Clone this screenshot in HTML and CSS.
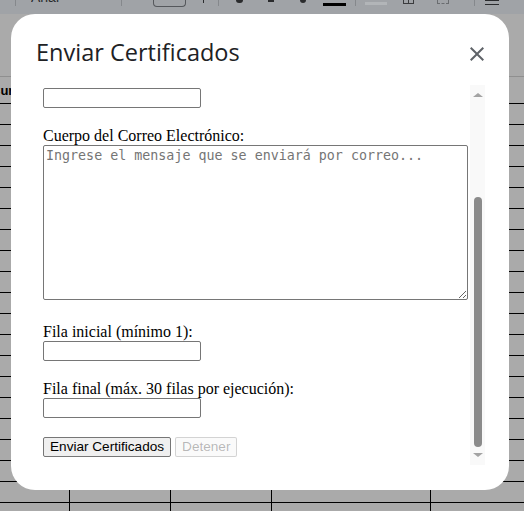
FILE: index.html
```html
<!DOCTYPE html>
<html lang="es">
<head>
<meta charset="utf-8">
<title>Enviar Certificados</title>
<link rel="stylesheet" href="styles.css">
</head>
<body>
<div class="sheet">
  <div class="toolbar">
    <span class="tb-sep tb-s1"></span>
    <span class="tb-font"><span class="tb-font-text">Arial</span></span>
    <span class="tb-sep tb-s2"></span>
    <span class="tb-size"></span>
    <span class="tb-plus"></span>
    <span class="tb-sep tb-s3"></span>
    <span class="tb-mark tb-b"></span>
    <span class="tb-mark tb-i"></span>
    <span class="tb-mark tb-u"></span>
    <span class="tb-color"></span>
    <span class="tb-sep tb-s4"></span>
    <span class="tb-fill"></span>
    <span class="tb-borders"></span>
    <span class="tb-merge"></span>
    <span class="tb-sep tb-s5"></span>
    <span class="tb-align"></span>
  </div>
  <div class="formula-area"></div>
  <div class="colhead"><span class="colhead-text">Cursos</span></div>
  <div class="rows"></div>
</div>

<div class="dialog" role="dialog" aria-labelledby="dlg-title">
  <div class="dialog-header">
    <h1 class="dialog-title" id="dlg-title">Enviar Certificados</h1>
    <button class="close-btn" type="button" aria-label="Cerrar">
      <svg width="24" height="24" viewBox="0 0 24 24" aria-hidden="true">
        <path d="M19 6.41L17.59 5 12 10.59 6.41 5 5 6.41 10.59 12 5 17.59 6.41 19 12 13.41 17.59 19 19 17.59 13.41 12z" fill="#5f6368"/>
      </svg>
    </button>
  </div>
  <div class="frame">
    <div class="viewport">
      <form class="content">
        <div class="field">
          <label class="lbl" for="f-plantilla">ID de la plantilla de presentación:</label>
          <input class="txt" id="f-plantilla" type="text">
        </div>
        <div class="field">
          <label class="lbl" for="f-carpeta">ID de la carpeta de destino:</label>
          <input class="txt" id="f-carpeta" type="text">
        </div>
        <div class="field">
          <label class="lbl" for="f-asunto">Asunto del Correo:</label>
          <input class="txt" id="f-asunto" type="text">
        </div>
        <div class="field field-area">
          <label class="lbl" for="f-cuerpo">Cuerpo del Correo Electrónico:</label>
          <textarea class="area" id="f-cuerpo" placeholder="Ingrese el mensaje que se enviará por correo..."></textarea>
        </div>
        <div class="field">
          <label class="lbl" for="f-inicio">Fila inicial (mínimo 1):</label>
          <input class="txt" id="f-inicio" type="text">
        </div>
        <div class="field">
          <label class="lbl" for="f-fin">Fila final (máx. 30 filas por ejecución):</label>
          <input class="txt" id="f-fin" type="text">
        </div>
        <div class="actions">
          <button class="btn" type="button">Enviar Certificados</button>
          <button class="btn" type="button" disabled>Detener</button>
        </div>
      </form>
    </div>
    <div class="sb" aria-hidden="true">
      <div class="sb-up"><span class="arrow-up"></span></div>
      <div class="sb-track"><div class="sb-thumb" style="margin-top:92px;height:250px"></div></div>
      <div class="sb-down"><span class="arrow-down"></span></div>
    </div>
  </div>
</div>
</body>
</html>
```
FILE: styles.css
```css
html, body {
  margin: 0;
  padding: 0;
}
body {
  width: 524px;
  height: 511px;
  overflow: hidden;
  background: #aaaaaa;
  font-family: "Liberation Serif", "Times New Roman", serif;
}

/* ---------- spreadsheet behind the dialog ---------- */
.sheet {
  width: 524px;
  height: 511px;
  display: flex;
  flex-direction: column;
}
.toolbar {
  height: 14px;
  flex: none;
  background: #a0a3a7;
  display: flex;
  align-items: flex-start;
  overflow: hidden;
}
.tb-sep {
  width: 1px;
  height: 6px;
  background: #85888c;
  flex: none;
}
.tb-s1 { margin-left: 15px; }
.tb-font {
  width: 40px;
  height: 3px;
  overflow: hidden;
  margin-left: 15px;
  flex: none;
}
.tb-font-text {
  display: block;
  margin-top: -11px;
  font: 14px "Liberation Sans", Arial, sans-serif;
  color: #2a2b2d;
}
.tb-s2 { margin-left: 50px; }
.tb-size {
  width: 31px;
  height: 6px;
  margin-left: 31px;
  border: 1px solid #55585c;
  border-top: none;
  border-radius: 0 0 4px 4px;
  flex: none;
}
.tb-plus {
  width: 1px;
  height: 3px;
  background: #2a2b2d;
  margin-left: 17px;
  flex: none;
}
.tb-s3 { margin-left: 14px; }
.tb-mark {
  width: 6px;
  height: 2px;
  background: #2a2b2d;
  flex: none;
}
.tb-b { margin-left: 17px; width: 7px; height: 3px; border-radius: 0 0 3px 3px; }
.tb-i { margin-left: 25px; }
.tb-u { margin-left: 26px; border-radius: 0 0 3px 3px; height: 3px; }
.tb-color {
  width: 23px;
  height: 3px;
  margin: 3px 0 0 17px;
  background: #000;
  flex: none;
}
.tb-s4 { margin-left: 9px; }
.tb-fill {
  width: 22px;
  height: 3px;
  margin: 2px 0 0 9px;
  background: #b2b5b8;
  flex: none;
}
.tb-borders {
  width: 9px;
  height: 3px;
  margin-left: 16px;
  border: 1px solid #3a3b3d;
  border-top: none;
  background: linear-gradient(#3a3b3d, #3a3b3d) center / 1px 100% no-repeat;
  flex: none;
}
.tb-merge {
  width: 10px;
  height: 3px;
  margin-left: 23px;
  border: 1px dashed #6a6d70;
  border-top: none;
  flex: none;
}
.tb-s5 { margin-left: 25px; }
.tb-align {
  width: 14px;
  height: 4px;
  margin-left: 10px;
  border-bottom: 1px solid #2a2b2d;
  background: linear-gradient(#2a2b2d, #2a2b2d) top / 100% 1px no-repeat;
  flex: none;
}
.formula-area {
  height: 62px;
  flex: none;
  background: #aaaaaa;
  border-bottom: 1px solid #8f8f8f;
}
.colhead {
  height: 26px;
  flex: none;
  border-bottom: 1px solid #000;
  display: flex;
  align-items: center;
  overflow: hidden;
}
.colhead-text {
  margin-left: -9px;
  font: bold 13px "Liberation Sans", Arial, sans-serif;
  color: #000;
}
.rows {
  flex: 1;
  background-color: #aaaaaa;
  background-image:
    linear-gradient(#000, #000),
    linear-gradient(#000, #000),
    linear-gradient(#000, #000),
    linear-gradient(#000, #000),
    repeating-linear-gradient(to bottom, transparent 0 20px, #000 20px 21px);
  background-size: 1px 100%, 1px 100%, 1px 100%, 1px 100%, 100% 100%;
  background-position: 69px 0, 170px 0, 271px 0, 430px 0, 0 0;
  background-repeat: no-repeat;
}

/* ---------- modal dialog ---------- */
.dialog {
  position: fixed;
  left: 11px;
  top: 14px;
  width: 498px;
  height: 476px;
  box-sizing: border-box;
  padding: 0 24px;
  background: #fff;
  border-radius: 24px;
  display: flex;
  flex-direction: column;
}
.dialog-header {
  display: flex;
  justify-content: space-between;
  align-items: flex-start;
  padding-top: 22px;
  height: 33px;
  flex: none;
}
.dialog-title {
  margin: 0 0 0 1px;
  font: 400 23.5px/32px "Open Sans", "Noto Sans", sans-serif;
  color: #202124;
  letter-spacing: 0;
}
.close-btn {
  width: 24px;
  height: 24px;
  margin: 6px -4px 0 0;
  padding: 0;
  border: none;
  background: transparent;
  display: flex;
}
.frame {
  margin-top: 16px;
  height: 380px;
  flex: none;
  display: flex;
}
.viewport {
  flex: 1;
  overflow: hidden;
  display: flex;
  flex-direction: column;
  justify-content: flex-end;
}
.content {
  flex: none;
  margin: 0;
  padding: 8px;
  display: flex;
  flex-direction: column;
  color: #000;
}
.field {
  margin-bottom: 19px;
}
.field-area {
  margin-bottom: 23px;
}
.lbl {
  display: block;
  font-size: 16px;
  line-height: 18px;
  height: 18px;
}
.txt {
  display: block;
  width: 158px;
  height: 20px;
  box-sizing: border-box;
  margin: 0;
  padding: 1px 2px;
  border: 1px solid #767676;
  border-radius: 2px;
  font: 13.333px "Liberation Sans", Arial, sans-serif;
  background: #fff;
}
.area {
  display: block;
  width: 425px;
  height: 155px;
  box-sizing: border-box;
  margin: 0;
  padding: 2px;
  border: 1px solid #767676;
  border-radius: 2px;
  font: 13.333px "DejaVu Sans Mono", monospace;
  background: #fff;
}
.area::placeholder {
  color: #757575;
}
.actions {
  display: flex;
  gap: 4px;
}
.btn {
  height: 20px;
  box-sizing: border-box;
  margin: 0;
  padding: 1px 6px;
  border: 1px solid #767676;
  border-radius: 2px;
  background: #efefef;
  color: #000;
  font: 13.6px "Liberation Sans", Arial, sans-serif;
  line-height: 16px;
}
.btn:disabled {
  color: rgba(16, 16, 16, 0.3);
  background: rgba(239, 239, 239, 0.3);
  border-color: rgba(118, 118, 118, 0.3);
}

/* ---------- drawn scrollbar ---------- */
.sb {
  width: 15px;
  flex: none;
  display: flex;
  flex-direction: column;
  background: #f9f9f9;
}
.sb-up {
  height: 20px;
  box-sizing: border-box;
  padding-top: 8px;
  display: flex;
  justify-content: center;
  align-items: flex-start;
}
.sb-down {
  height: 18px;
  box-sizing: border-box;
  padding-top: 6px;
  display: flex;
  justify-content: center;
  align-items: flex-start;
}
.arrow-up {
  width: 0;
  height: 0;
  border-left: 5px solid transparent;
  border-right: 5px solid transparent;
  border-bottom: 4px solid #a3a3a3;
}
.arrow-down {
  width: 0;
  height: 0;
  border-left: 5px solid transparent;
  border-right: 5px solid transparent;
  border-top: 4px solid #a3a3a3;
}
.sb-track {
  flex: 1;
  display: flex;
  justify-content: center;
  align-items: flex-start;
}
.sb-thumb {
  width: 8px;
  border-radius: 4px;
  background: #8b8b8b;
}
```
